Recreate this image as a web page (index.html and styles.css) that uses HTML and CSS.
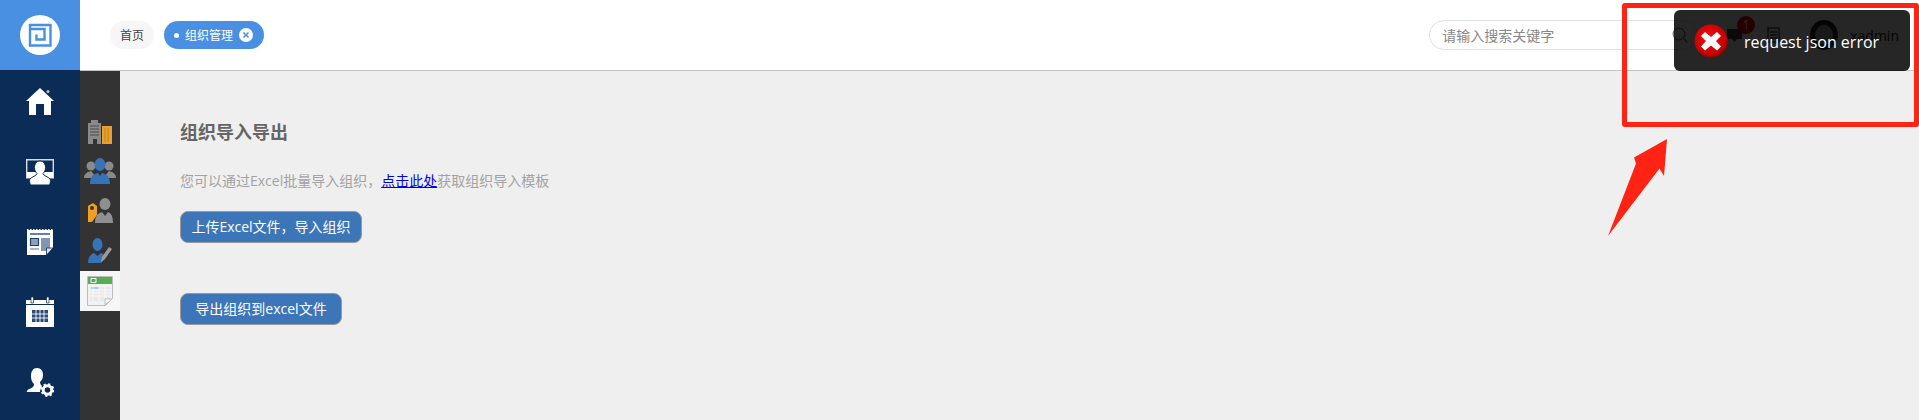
FILE: index.html
```html
<!DOCTYPE html>
<html lang="zh">
<head>
<meta charset="utf-8">
<title>组织导入导出</title>
<link rel="stylesheet" href="styles.css">
</head>
<body>
<div class="app">
  <aside class="rail">
    <div class="logo">
      <svg width="40" height="40" viewBox="0 0 40 40"><circle cx="20" cy="20" r="20" fill="#fff"/><path d="M10 14V10H30.500V30.500H10V14H24.500V24.500H16.500V19.500" fill="none" stroke="#4a90e2" stroke-width="2.400"/></svg>
    </div>
    <nav class="rail-nav">
      <a class="rail-item"><svg width="28" height="28" viewBox="0 0 28 28"><path d="M14 0 28 13H25V27H18V16H10V27H3V13H0Z" fill="#fff"/><circle cx="22" cy="3.500" r="1.500" fill="#b8c4d4"/></svg></a>
      <a class="rail-item"><svg width="28" height="26" viewBox="0 0 28 26"><path d="M.7.700h26.600v18H.700z" fill="none" stroke="#d9dee6" stroke-width="1.400"/><path d="M1 13h26v6H1z" fill="#fff"/><path d="M14 2c3.500 0 5.500 3 5.500 6.500 0 2.500-1 4.500-2.500 6 .5 2.500 5 3 7 5.500 1 1.500 0 6-1 6H5c-1 0-2-4.500-1-6 2-2.500 6.500-3 7-5.500-1.500-1.500-2.500-3.500-2.500-6C8.500 5 10.500 2 14 2z" fill="#fff" stroke="#0a2c57"/></svg></a>
      <a class="rail-item"><svg width="26" height="26" viewBox="0 0 26 26"><path d="M0 1h26v18l-7 7H0z" fill="#fff"/><path d="M0 .8h26" stroke="#fff" stroke-width="1.600" stroke-dasharray="1.500 1.500"/><path d="M3 5h20" stroke="#0a2c57" stroke-width="1.200"/><path d="M3.500 9.500h8v7h-8z" fill="#8aa0bc" stroke="#23436f" stroke-width="1.200"/><path d="M14 9h9v10l-3 3h-6z" fill="#8296b2"/><path d="M3 20h9" stroke="#8aa0bc" stroke-width="1.500"/><path d="M26 19h-6.500v7z" fill="#dfe4ea" stroke="#0a2c57" stroke-width=".8"/></svg></a>
      <a class="rail-item"><svg width="28" height="30" viewBox="0 0 28 30"><path d="M0 3h28v27H0z" fill="#fff"/><path d="M5 0h2.500v6H5zM20.500 0H23v6h-2.500z" fill="#fff" stroke="#0a2c57" stroke-width=".7"/><path d="M0 7.500h28" stroke="#0a2c57"/><path d="M6 13h16v12H6z" fill="#2a4a75"/><path d="M6 17h16M6 21h16M10 13v12M14 13v12M18 13v12" stroke="#fff" stroke-width=".9"/></svg></a>
      <a class="rail-item"><svg width="28" height="30" viewBox="0 0 28 30"><path d="M11 1c4 0 6 3 6 7 0 3-1 5-3 7 0 2 1 3 2 4-1 2-2 4-2 6H1c-1 0 0-2 2-3 3-1 5-2 5-5-2-2-3-4-3-8 0-5 2-8 6-8z" fill="#fff"/><circle cx="21.500" cy="23" r="4.300" fill="none" stroke="#fff" stroke-width="3"/><circle cx="21.500" cy="23" r="6" fill="none" stroke="#fff" stroke-width="1.800" stroke-dasharray="2.200 2.500"/></svg></a>
    </nav>
  </aside>
  <div class="main">
    <header class="topbar">
      <div class="tabs">
        <span class="tab">首页</span>
        <span class="tab tab-active"><i class="dot"></i>组织管理<svg class="tab-close" width="14" height="14" viewBox="0 0 14 14"><circle cx="7" cy="7" r="7" fill="#fff"/><path d="M4.500 4.500l5 5M9.500 4.500l-5 5" stroke="#4a90e2" stroke-width="1.500"/></svg></span>
      </div>
      <div class="tools">
        <div class="search"><span class="placeholder">请输入搜索关键字</span><svg width="16" height="16" viewBox="0 0 16 16"><circle cx="7" cy="7" r="5.800" fill="none" stroke="#777" stroke-width="1.300"/><path d="M11 11l4.500 4.500" stroke="#777" stroke-width="1.400"/></svg></div>
        <div class="msg"><svg width="17" height="17" viewBox="0 0 17 17"><path d="M1 2h15v10h-5l-2.500 3L6 12H1z" fill="#444"/></svg><span class="badge">1</span></div>
        <svg class="doc" width="14" height="16" viewBox="0 0 14 16"><path d="M1 1h11v14H1zM3 5h7M3 8h7M3 11h7" fill="none" stroke="#555" stroke-width="1.400"/></svg>
        <span class="avatar"></span>
        <span class="user">xadmin</span>
      </div>
    </header>
    <div class="body">
      <aside class="subnav">
        <a class="sub-item"><svg width="24" height="25" viewBox="0 0 24 25"><path d="M0 4h3V1h7v3h3v21H9v-5H5v5H0z" fill="#8a8a8a"/><path d="M2 7h9M2 10h9M2 13h9M2 16h9" stroke="#4d4d4d"/><path d="M14 7h10v18H14z" fill="#e8a033"/><path d="M17 9v14M20 9v14" stroke="#b87a1e" stroke-width=".8"/></svg></a>
        <a class="sub-item"><svg width="32" height="26" viewBox="0 0 32 26"><circle cx="7" cy="8" r="4.500" fill="#8a8a8a"/><circle cx="25" cy="8" r="4.500" fill="#8a8a8a"/><path d="M0 20c0-4 3-6 7-7l5 6-4 1zM32 20c0-4-3-6-7-7l-5 6 4 1z" fill="#8a8a8a"/><ellipse cx="16" cy="6.500" rx="5.500" ry="6.500" fill="#3873b8"/><path d="M6 26c0-7 3-10 8-11l2 3 2-3c5 1 8 4 8 11z" fill="#3873b8"/></svg></a>
        <a class="sub-item"><svg width="26" height="26" viewBox="0 0 26 26"><path d="M1 8l5-3 4 3v9l-5 7H1z" fill="#f0a020"/><circle cx="5" cy="10" r="2" fill="#333"/><ellipse cx="18" cy="6" rx="5.500" ry="6" fill="#8f8f8f"/><path d="M8 25c0-7 3-10 7-11l3 4 3-4c3 1 5 4 5 11z" fill="#8f8f8f"/></svg></a>
        <a class="sub-item"><svg width="24" height="26" viewBox="0 0 24 26"><ellipse cx="9.500" cy="6.500" rx="5" ry="6.500" fill="#3873b8"/><path d="M0 25c0-6 3-9 6-10l3.500 3 3.500-3c2 .7 3 1.500 4 3l-4 7z" fill="#3873b8"/><path d="M13 24.500l1-5.500 7-10 3 2-7 10z" fill="#9a9a9a"/></svg></a>
        <a class="sub-item sub-active"><svg width="26" height="30" viewBox="0 0 26 30"><path d="M.5.500h25v22l-7 7H.500z" fill="#f2f2f2" stroke="#bdbdbd"/><path d="M1 1h24v7H1z" fill="#55ae55"/><path d="M4 2.500h5v4H4z" fill="none" stroke="#fff"/><path d="M3 11h20v14H3z" fill="#e8e8e8"/><path d="M4 11h8v2H4z" fill="#a9c8f4"/><path d="M3 14h20M3 17h20M3 20h20M6 11v14M12 11v14M18 11v14" stroke="#fff" stroke-width=".7"/><path d="M25 23h-7v6z" fill="#fff" stroke="#bdbdbd"/></svg></a>
      </aside>
      <main class="content">
        <h1 class="title">组织导入导出</h1>
        <p class="desc">您可以通过Excel批量导入组织，<a class="link" href="#">点击此处</a>获取组织导入模板</p>
        <button class="btn btn-upload">上传Excel文件，导入组织</button>
        <button class="btn btn-export">导出组织到excel文件</button>
      </main>
    </div>
  </div>
</div>
<div class="toast">
  <svg class="toast-icon" width="34" height="34" viewBox="0 0 34 34"><defs><radialGradient id="redball" cx=".45" cy=".4" r=".65"><stop offset="0" stop-color="#f01010"/><stop offset=".75" stop-color="#c80000"/><stop offset="1" stop-color="#7a0000"/></radialGradient></defs><circle cx="17" cy="17" r="16.500" fill="url(#redball)"/><path d="M11 8l6 5 6-5 4 4-5 5 5 5.500-4 4-6-5-6 5-4-4L12 17 7 12z" fill="#fff"/></svg>
  <span class="toast-text">request json error</span>
</div>
<div class="frame"></div>
<svg class="arrow" width="62" height="100" viewBox="0 0 62 100"><path d="M60 0 57 37 52.500 29.500 1 97 29 24.500 27 18.500z" fill="#ff2314"/></svg>
</body>
</html>
```
FILE: styles.css
```css
* { box-sizing: border-box; }
html, body { margin: 0; height: 100%; overflow: hidden; }
body { font-family: "Open Sans", "Noto Sans CJK SC", sans-serif; background: #efefef; color: #666; }
.app { display: flex; height: 420px; }
.rail { width: 80px; flex: none; background: #0a2c57; display: flex; flex-direction: column; }
.logo { height: 70px; background: #4a90e2; display: flex; align-items: center; justify-content: center; }
.rail-nav { display: flex; flex-direction: column; margin-top: -3px; }
.rail-item { height: 70px; display: flex; align-items: center; justify-content: center; }
.main { flex: 1; display: flex; flex-direction: column; min-width: 0; }
.topbar { height: 71px; flex: none; background: #fff; border-bottom: 1px solid #c4c4c4; display: flex; align-items: center; justify-content: space-between; padding: 0 20px 0 30px; }
.tabs { display: flex; gap: 10px; }
.tab { height: 28px; padding: 0 10px; border-radius: 14px; background: #f6f6f6; color: #444; font-size: 12px; display: inline-flex; align-items: center; }
.tab-active { background: #4a90e2; color: #fff; width: 100px; padding: 0 0 0 10px; }
.dot { width: 5px; height: 5px; border-radius: 50%; background: #fff; margin-right: 6px; }
.tab-close { margin-left: 6px; }
.tools { display: flex; align-items: center; }
.search { width: 269px; height: 30px; border: 1px solid #e0e0e0; border-radius: 15px; display: flex; align-items: center; justify-content: space-between; padding: 0 9px 0 12px; }
.placeholder { font-size: 14px; color: #888; }
.msg { position: relative; margin-left: 28px; display: flex; }
.badge { position: absolute; right: -12px; top: -11px; width: 18px; height: 18px; border-radius: 50%; background: #ff0000; color: #fff; font-size: 12px; line-height: 18px; text-align: center; }
.doc { margin-left: 24px; }
.avatar { width: 28px; height: 30px; border-radius: 50%; background: #aaa; border: 5px solid #222; margin-left: 29px; }
.user { font-size: 14px; color: #222; margin-left: 12px; }
.body { flex: 1; display: flex; min-height: 0; }
.subnav { width: 40px; flex: none; background: #333; padding-top: 40px; display: flex; flex-direction: column; }
.sub-item { height: 40px; display: flex; align-items: center; justify-content: center; }
.sub-active { background: #f6f6f6; }
.content { flex: 1; padding: 49px 60px 0; display: flex; flex-direction: column; align-items: flex-start; }
.title { margin: 0; font-size: 18px; line-height: 24px; font-weight: 700; color: #666; }
.desc { margin: 25px 0 0; font-size: 14px; line-height: 24px; color: #a3a3a3; }
.link { color: #0000ee; text-decoration: underline; }
.btn { height: 32px; padding: 0; border: 1px solid #999; border-radius: 8px; background: #3d76b8; color: #fff; font-family: inherit; font-size: 14px; line-height: 20px; }
.btn-upload { width: 182px; margin-top: 18px; }
.btn-export { width: 162px; margin-top: 50px; }
.toast { position: absolute; left: 1674px; top: 10px; width: 236px; height: 61px; border-radius: 6px; background: rgba(0, 0, 0, .85); display: flex; align-items: center; padding-left: 20px; }
.toast-text { color: #fff; font-size: 16px; margin-left: 16px; position: relative; top: 1px; }
.frame { position: absolute; left: 1622px; top: 3px; width: 297px; height: 124px; border: 5px solid #ff2314; border-radius: 3px; }
.arrow { position: absolute; left: 1607px; top: 139px; }
```
